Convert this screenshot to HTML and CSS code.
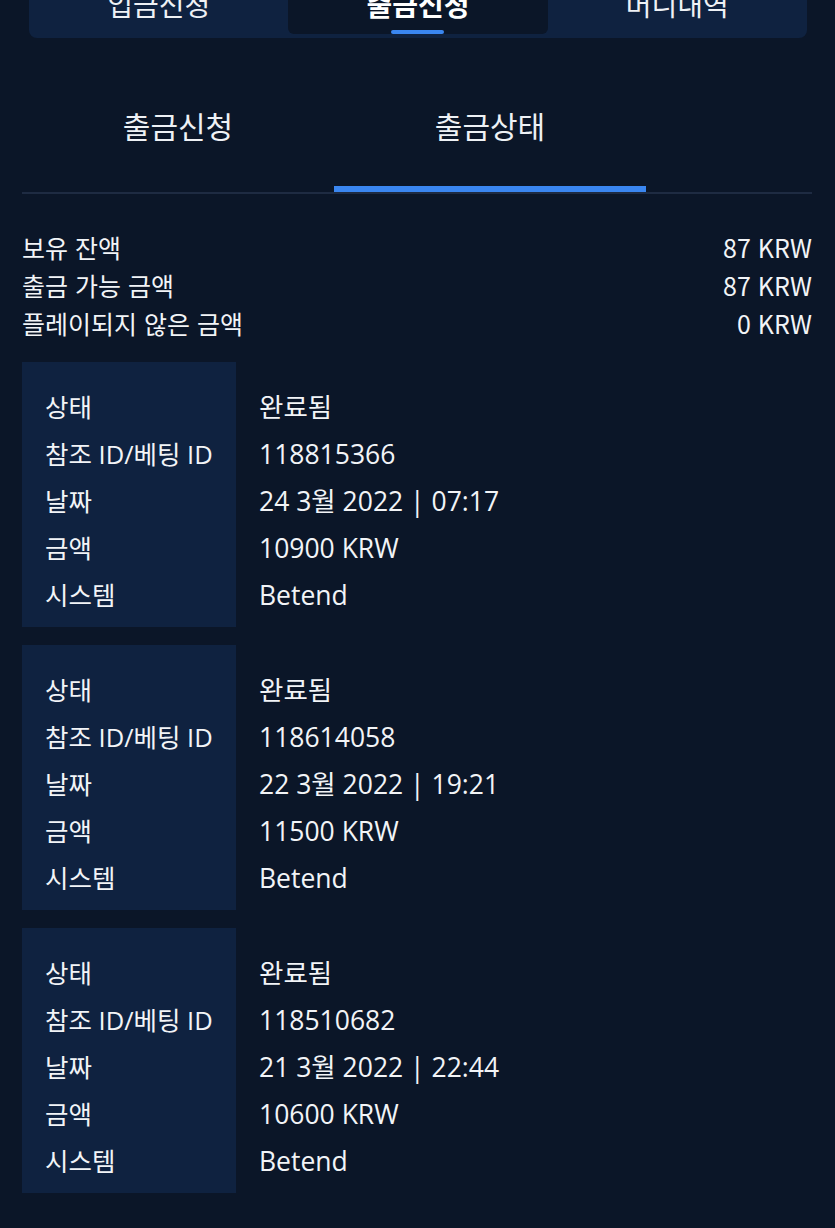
FILE: index.html
```html
<!DOCTYPE html>
<html lang="ko">
<head>
  <meta charset="UTF-8" />
  <title>출금상태</title>
  <link rel="stylesheet" href="styles.css">
</head>
<body>
  <div class="page">
    <div class="top-tabs">
      <a class="top-tab">입금신청</a>
      <a class="top-tab active">출금신청</a>
      <a class="top-tab">머니내역</a>
    </div>

    <div class="sub-tabs">
      <a class="sub-tab">출금신청</a>
      <a class="sub-tab active">출금상태</a>
    </div>

    <div class="balance">
      <div class="balance-row"><span>보유 잔액</span><span>87 KRW</span></div>
      <div class="balance-row"><span>출금 가능 금액</span><span>87 KRW</span></div>
      <div class="balance-row"><span>플레이되지 않은 금액</span><span>0 KRW</span></div>
    </div>

    <div class="history">
      <div class="record">
        <div class="labels">
          <div>상태</div>
          <div>참조 ID/베팅 ID</div>
          <div>날짜</div>
          <div>금액</div>
          <div>시스템</div>
        </div>
        <div class="values">
          <div>완료됨</div>
          <div>118815366</div>
          <div>24 3월 2022 | 07:17</div>
          <div>10900 KRW</div>
          <div>Betend</div>
        </div>
      </div>

      <div class="record">
        <div class="labels">
          <div>상태</div>
          <div>참조 ID/베팅 ID</div>
          <div>날짜</div>
          <div>금액</div>
          <div>시스템</div>
        </div>
        <div class="values">
          <div>완료됨</div>
          <div>118614058</div>
          <div>22 3월 2022 | 19:21</div>
          <div>11500 KRW</div>
          <div>Betend</div>
        </div>
      </div>

      <div class="record">
        <div class="labels">
          <div>상태</div>
          <div>참조 ID/베팅 ID</div>
          <div>날짜</div>
          <div>금액</div>
          <div>시스템</div>
        </div>
        <div class="values">
          <div>완료됨</div>
          <div>118510682</div>
          <div>21 3월 2022 | 22:44</div>
          <div>10600 KRW</div>
          <div>Betend</div>
        </div>
      </div>
    </div>
  </div>
</body>
</html>
```

FILE: styles.css
```css
body {
  margin: 0;
  background: #0b1628;
  color: #f2f4f7;
  font-family: "Open Sans", "Noto Sans CJK KR", sans-serif;
  overflow: hidden;
}

.page {
  padding: 0 23px 0 22px;
}

/* top navigation, scrolled partly out of view */
.top-tabs {
  display: flex;
  margin: -26px 5px 0 7px;
  height: 64px;
  background: #0f2240;
  border-radius: 8px;
  padding: 0 0 4px;
  box-sizing: border-box;
}

.top-tab {
  flex: 1;
  display: flex;
  align-items: center;
  justify-content: center;
  font-family: "Noto Sans CJK KR", sans-serif;
  font-size: 28px;
  color: #eef1f5;
  position: relative;
}

.top-tab.active {
  background: #0b1628;
  border-radius: 0 0 6px 6px;
  font-weight: bold;
  color: #fff;
}

.top-tab.active::after {
  content: "";
  position: absolute;
  left: 50%;
  bottom: 0;
  width: 53px;
  height: 4px;
  margin-left: -27px;
  background: #3a86f0;
  border-radius: 2px;
}

/* sub tabs */
.sub-tabs {
  display: flex;
  margin-top: 35px;
  border-bottom: 2px solid #1e2b42;
  height: 119px;
}

.sub-tab {
  width: 312px;
  display: flex;
  align-items: center;
  justify-content: center;
  padding-bottom: 16px;
  font-family: "Noto Sans CJK KR", sans-serif;
  font-size: 30px;
  color: #eef1f5;
  box-sizing: border-box;
}

.sub-tab.active {
  border-bottom: 6px solid #3a86f0;
  padding-bottom: 10px;
}

/* balance summary */
.balance {
  padding: 34px 0 20px;
  font-family: "Noto Sans CJK KR", sans-serif;
  font-size: 25px;
}

.balance-row {
  display: flex;
  justify-content: space-between;
  height: 38px;
  align-items: center;
}

/* withdrawal records */
.history {
  display: flex;
  flex-direction: column;
  gap: 18px;
}

.record {
  display: flex;
  font-size: 25.5px;
}

.labels {
  width: 214px;
  background: #0f2240;
  padding: 22px 0 8px 23px;
  box-sizing: border-box;
}

.values {
  padding: 22px 0 8px 23px;
  font-size: 26.5px;
}

.labels div,
.values div {
  height: 47px;
  line-height: 47px;
  white-space: nowrap;
}
```
